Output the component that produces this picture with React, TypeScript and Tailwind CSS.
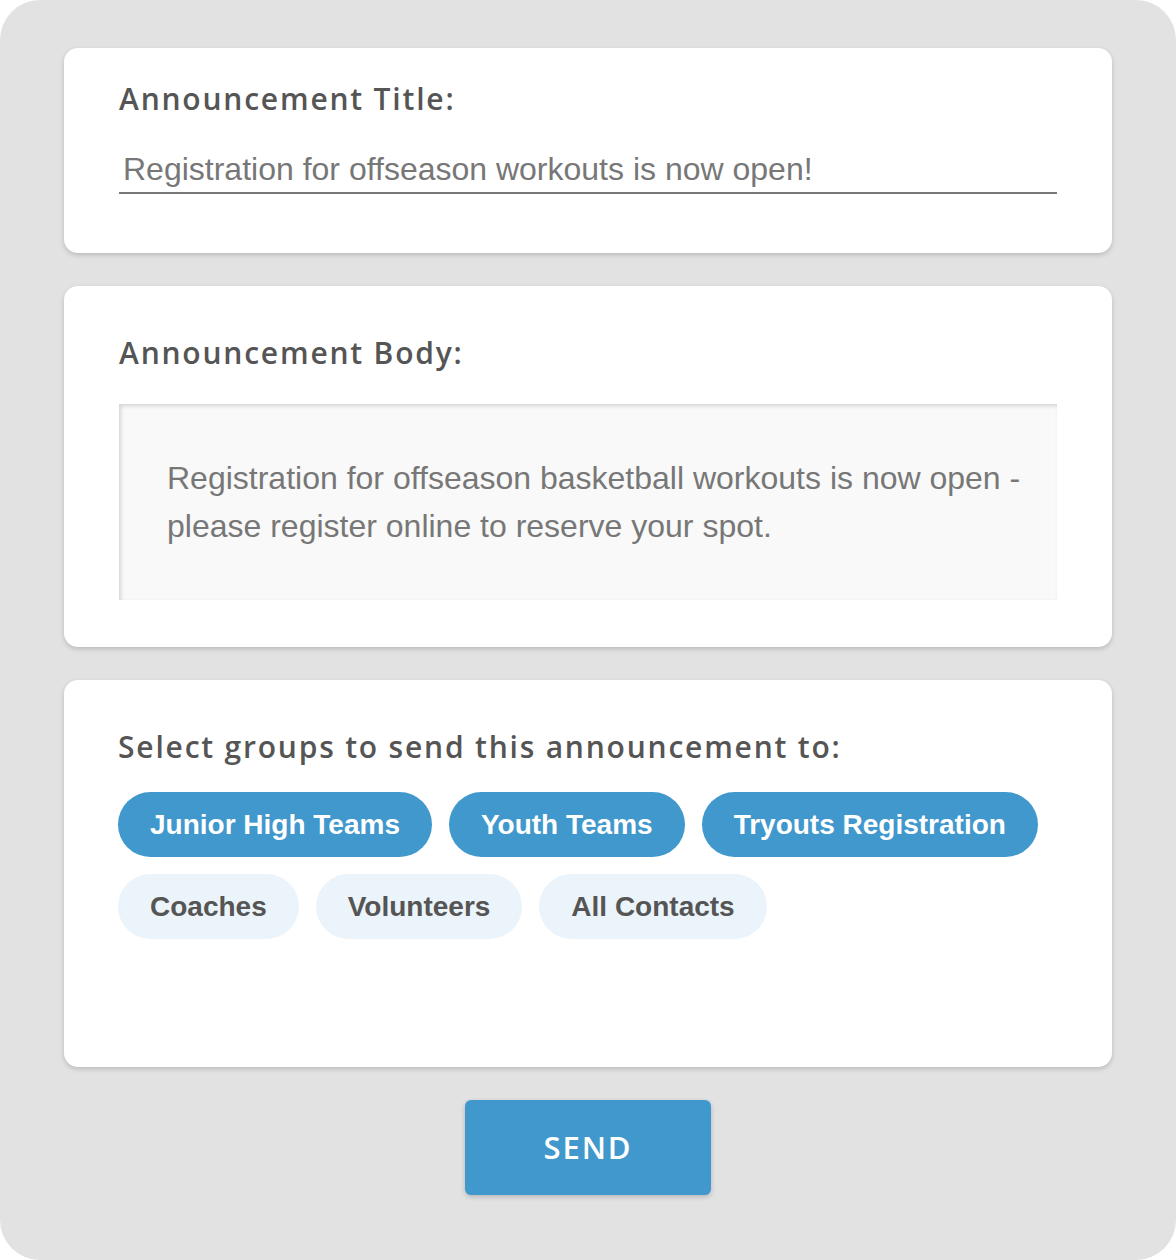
import React from "react";

const heading = "font-['Open_Sans',sans-serif] text-[30px] leading-[36px] font-semibold tracking-[0.06em] text-[#555555]";
const body = "font-['Liberation_Sans',Arial,sans-serif]";

const selected = ["Junior High Teams", "Youth Teams", "Tryouts Registration"];
const others = ["Coaches", "Volunteers", "All Contacts"];

function Chip({ label, active }: { label: string; active: boolean }) {
  return (
    <span
      className={`${body} inline-flex h-[65px] items-center rounded-full px-8 text-[28px] font-bold ${
        active ? "bg-[#4198cc] text-white" : "bg-[#ebf4fa] text-[#555555]"
      }`}
    >
      {label}
    </span>
  );
}

export default function App() {
  return (
    <div className="bg-white">
      <div className="flex h-[1260px] w-[1176px] flex-col items-center rounded-[40px] bg-[#e2e2e2] px-16 pt-12">
        <div className="flex w-full flex-col gap-[33px]">
          <div className="h-[205px] rounded-[14px] bg-white px-[55px] pt-[33px] shadow-[0_2px_5px_rgba(0,0,0,0.18)]">
            <h2 className={heading}>Announcement Title:</h2>
            <div className={`${body} mt-[33px] border-b-2 border-[#777777] pb-[4px] pl-[4px] text-[32px] leading-[38px] text-[#777777]`}>
              Registration for offseason workouts is now open!
            </div>
          </div>

          <div className="h-[361px] rounded-[14px] bg-white px-[55px] pt-[49px] shadow-[0_2px_5px_rgba(0,0,0,0.18)]">
            <h2 className={heading}>Announcement Body:</h2>
            <div className={`${body} mt-[33px] h-[196px] bg-[#f9f9f9] pl-[48px] pr-[28px] pt-[50px] text-[32px] leading-[48px] text-[#777777] shadow-[inset_2px_2px_4px_rgba(0,0,0,0.15)]`}>
              Registration for offseason basketball workouts is now open - please register online to reserve your spot.
            </div>
          </div>

          <div className="h-[387px] rounded-[14px] bg-white px-[54px] pt-[49px] shadow-[0_2px_5px_rgba(0,0,0,0.18)]">
            <h2 className={heading}>Select groups to send this announcement to:</h2>
            <div className="mt-[27px] flex flex-wrap gap-[17px]">
              {selected.map((s) => (
                <Chip key={s} label={s} active />
              ))}
            </div>
            <div className="mt-[17px] flex flex-wrap gap-[17px]">
              {others.map((s) => (
                <Chip key={s} label={s} active={false} />
              ))}
            </div>
          </div>
        </div>

        <button className="mt-[33px] h-[95px] w-[246px] rounded-[6px] bg-[#4198cc] font-['Open_Sans',sans-serif] text-[31px] font-semibold tracking-[0.06em] text-white shadow-[0_2px_5px_rgba(0,0,0,0.2)]">
          SEND
        </button>
      </div>
    </div>
  );
}
